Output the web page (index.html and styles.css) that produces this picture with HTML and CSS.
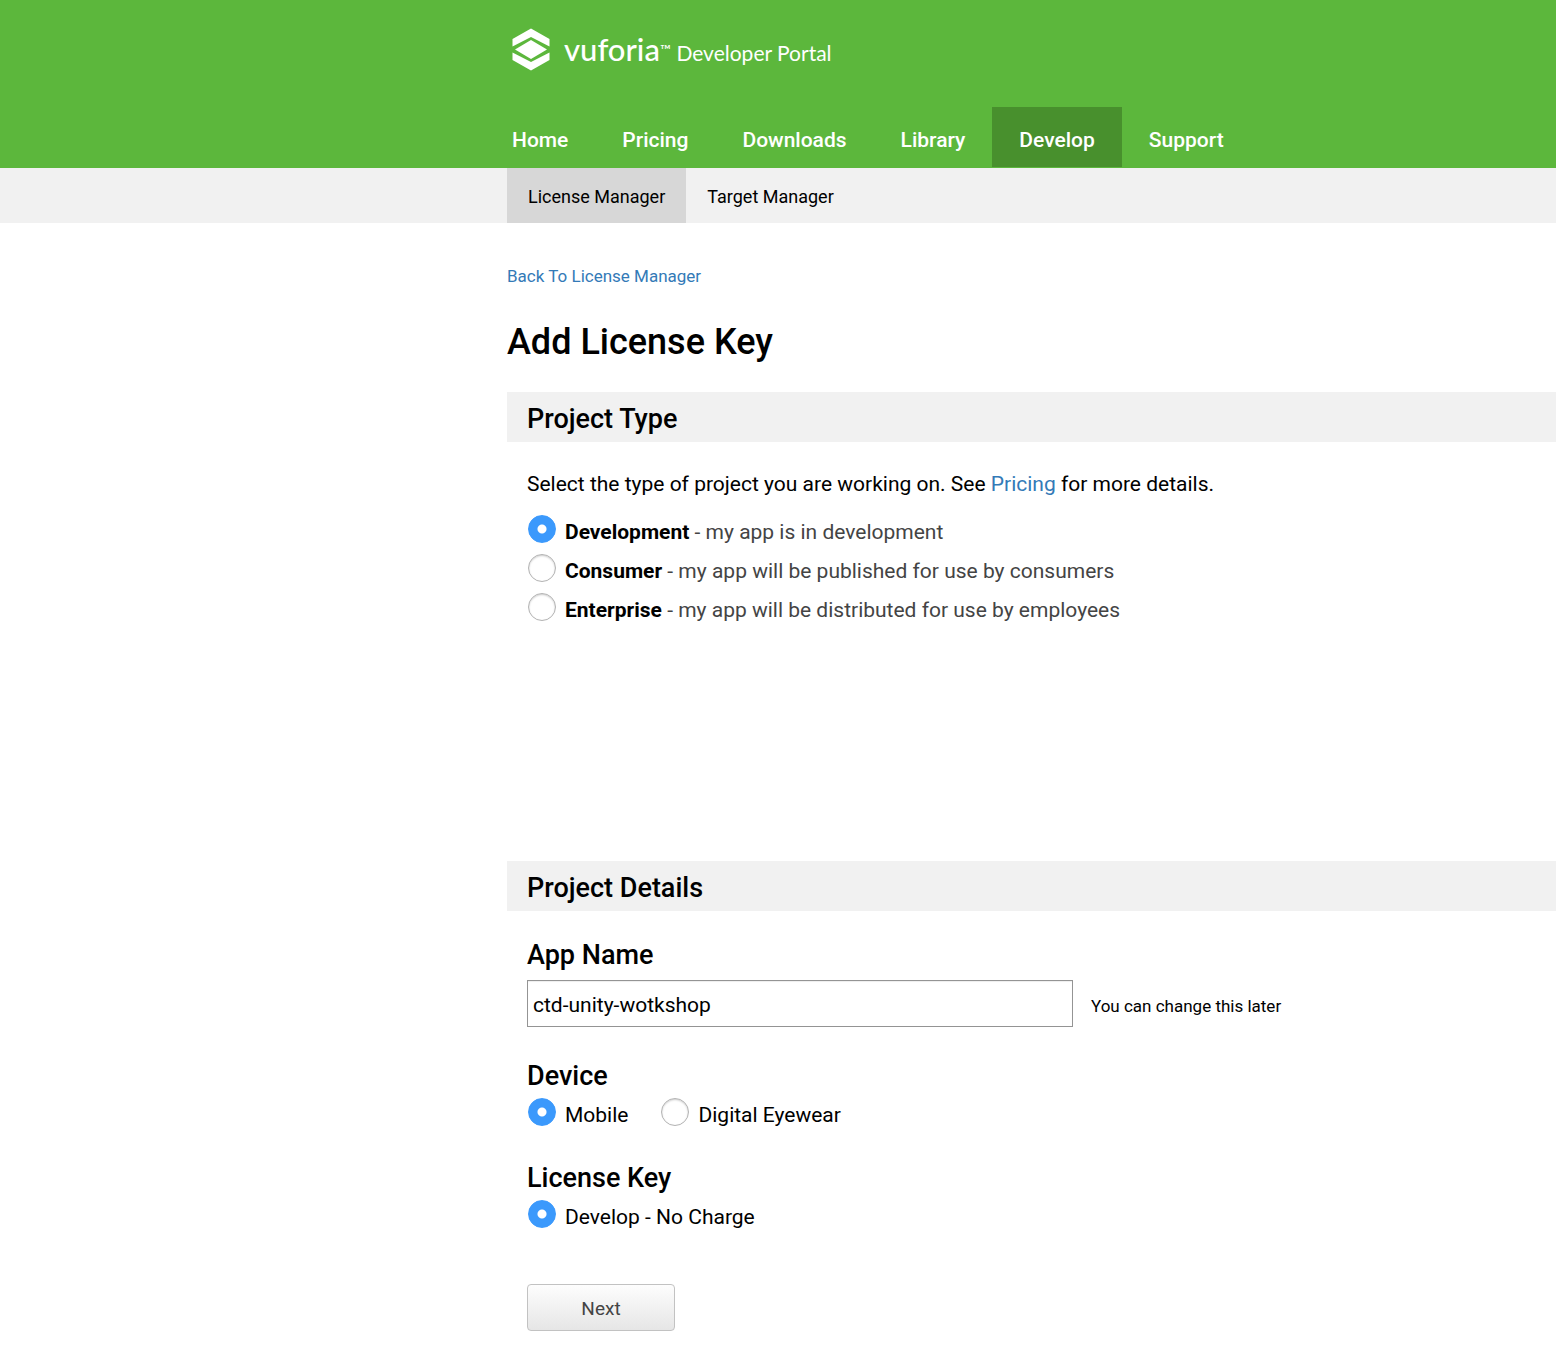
FILE: index.html
```html
<!DOCTYPE html>
<html lang="en">
<head>
  <meta charset="utf-8">
  <meta name="viewport" content="width=device-width, initial-scale=1">
  <title>Add License Key</title>
  <link rel="stylesheet" href="styles.css">
</head>
<body>
  <header class="header">
    <a class="brand" href="#">
      <svg class="brand-mark" viewBox="0 0 38 44" width="38" height="44" aria-hidden="true">
        <path fill="#fff" d="M19 .5 37.500 11V18.500L19 9 .5 18.500V11ZM19 12 35 21.500 19 31 3 21.500ZM.5 24.500 19 34 37.500 24.500V32L19 42.500 .5 32Z"/>
      </svg>
      <span class="brand-name">vuforia<span class="brand-tm">™</span></span>
      <span class="brand-portal">Developer Portal</span>
    </a>
    <nav class="nav">
      <a class="nav-link" href="#">Home</a>
      <a class="nav-link" href="#">Pricing</a>
      <a class="nav-link" href="#">Downloads</a>
      <a class="nav-link" href="#">Library</a>
      <a class="nav-link nav-link-active" href="#">Develop</a>
      <a class="nav-link" href="#">Support</a>
    </nav>
  </header>
  <nav class="subnav">
    <a class="subnav-link subnav-link-active" href="#">License Manager</a>
    <a class="subnav-link" href="#">Target Manager</a>
  </nav>
  <main class="content">
    <a class="back" href="#">Back To License Manager</a>
    <h1 class="title">Add License Key</h1>
    <form class="form">
      <section class="section section-type">
        <h2 class="bar">Project Type</h2>
        <div class="section-body">
          <p class="intro">Select the type of project you are working on. See <a class="link" href="#">Pricing</a> for more details.</p>
          <div class="choices">
            <label class="choice"><input class="radio" type="radio" name="type" checked><span class="choice-text"><b>Development</b> - my app is in development</span></label>
            <label class="choice"><input class="radio" type="radio" name="type"><span class="choice-text"><b>Consumer</b> - my app will be published for use by consumers</span></label>
            <label class="choice"><input class="radio" type="radio" name="type"><span class="choice-text"><b>Enterprise</b> - my app will be distributed for use by employees</span></label>
          </div>
        </div>
      </section>
      <section class="section">
        <h2 class="bar">Project Details</h2>
        <div class="section-body">
          <div class="group">
            <label class="group-title" for="app-name">App Name</label>
            <div class="field">
              <input class="text-input" id="app-name" type="text" value="ctd-unity-wotkshop">
              <span class="hint">You can change this later</span>
            </div>
          </div>
          <div class="group">
            <h3 class="group-title">Device</h3>
            <div class="options">
              <label class="choice"><input class="radio" type="radio" name="device" checked><span class="option-text">Mobile</span></label>
              <label class="choice"><input class="radio" type="radio" name="device"><span class="option-text">Digital Eyewear</span></label>
            </div>
          </div>
          <div class="group">
            <h3 class="group-title">License Key</h3>
            <div class="options">
              <label class="choice"><input class="radio" type="radio" name="license" checked><span class="option-text">Develop - No Charge</span></label>
            </div>
          </div>
          <button class="next" type="submit">Next</button>
        </div>
      </section>
    </form>
  </main>
</body>
</html>
```

FILE: styles.css
```css
:root {
  --gutter: 507px;
}

* {
  box-sizing: border-box;
}

body {
  margin: 0;
  background: #fff;
  color: #000;
  font-family: Roboto, "Liberation Sans", sans-serif;
  font-size: 21px;
}

a {
  text-decoration: none;
}

h1, h2, h3, p {
  margin: 0;
}

.header {
  background: #5cb73c;
  padding: 28px 0 1px;
}

.brand {
  display: flex;
  align-items: baseline;
  height: 44px;
  padding-left: calc(var(--gutter) + 5px);
  color: #fff;
  font-family: Lato, sans-serif;
}

.brand-mark {
  align-self: center;
  margin-right: 14px;
}

.brand-name {
  font-size: 31px;
  font-weight: 500;
  line-height: 42px;
}

.brand-tm {
  font-size: 14px;
  vertical-align: 6px;
}

.brand-portal {
  margin-left: 6px;
  font-size: 21px;
}

.nav {
  display: flex;
  margin: 35px 0 0 calc(var(--gutter) - 22px);
}

.nav-link {
  padding: 6px 27px 0;
  color: #fff;
  font-weight: 500;
  line-height: 54px;
}

.nav-link-active {
  background: #48902d;
}

.subnav {
  display: flex;
  padding-left: var(--gutter);
  background: #f1f1f1;
}

.subnav-link {
  padding: 2px 21px 0;
  color: #000;
  font-size: 18px;
  line-height: 53px;
}

.subnav-link-active {
  background: #d7d7d7;
}

.content {
  padding: 40px 0 23px var(--gutter);
}

.back {
  display: block;
  color: #337ab7;
  font-size: 17px;
  line-height: 26px;
}

.title {
  margin: 30px 0 26px;
  font-size: 36px;
  font-weight: 500;
  line-height: 47px;
}

.section-type {
  min-height: 469px;
}

.bar {
  padding: 4px 20px 0;
  background: #f1f1f1;
  font-size: 27px;
  font-weight: 500;
  line-height: 46px;
}

.section-body {
  padding: 26px 20px 0;
}

.intro {
  line-height: 32px;
}

.link {
  color: #337ab7;
}

.choices {
  display: grid;
  gap: 5px;
  margin-top: 15px;
}

.choice {
  display: flex;
  align-items: flex-start;
}

.radio {
  appearance: none;
  flex: none;
  width: 28px;
  height: 28px;
  margin: 0 9px 0 1px;
  border: 1px solid #b3b3b3;
  border-radius: 50%;
  background: #fff;
  box-shadow: inset 0 1px 2px #ccc;
}

.radio:checked {
  border-color: #3b99fc;
  background: radial-gradient(circle, #fff 4px, #3b99fc 5px);
  box-shadow: none;
}

.choice-text,
.option-text {
  line-height: 34px;
}

.choice-text {
  color: #444;
}

.choice-text b {
  color: #000;
  font-weight: 700;
}

.group {
  margin-bottom: 28px;
}

.group-title {
  display: block;
  font-size: 27px;
  font-weight: 500;
  line-height: 36px;
}

.field {
  display: flex;
  align-items: center;
  gap: 18px;
  padding: 7px 0 3px;
}

.text-input {
  width: 546px;
  height: 47px;
  padding: 2px 5px 0;
  border: 1px solid #949494;
  border-radius: 0;
  background: #fff;
  box-shadow: inset 0 1px 1px #eee;
  color: #000;
  font: inherit;
}

.hint {
  padding-top: 4px;
  font-size: 17px;
}

.options {
  display: flex;
  gap: 32px;
  margin-top: 4px;
}

.next {
  display: block;
  width: 148px;
  height: 47px;
  margin-top: 50px;
  padding: 2px 0 0;
  border: 1px solid #c2c2c2;
  border-radius: 4px;
  background: linear-gradient(#fdfdfd, #e6e6e6);
  color: #444;
  font-family: inherit;
  font-size: 19px;
}
```
